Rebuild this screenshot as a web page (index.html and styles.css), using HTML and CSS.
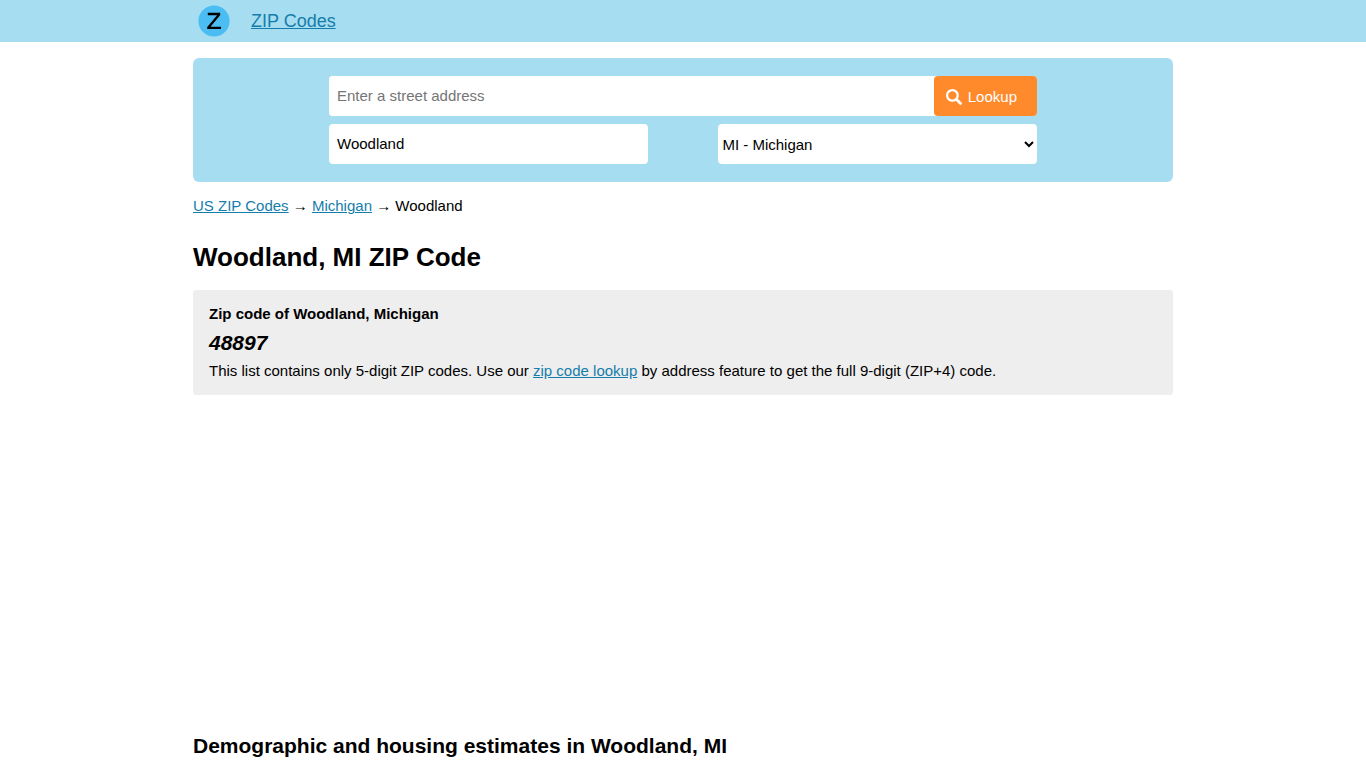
FILE: index.html
```html
<!DOCTYPE html>
<html lang="en">
<head>
    <meta charset="UTF-8">
    <meta name="viewport" content="width=device-width, initial-scale=1">
    <title>Woodland, MI ZIP Code</title>
    <link rel="stylesheet" href="styles.css">
</head>
<body>
<header class="top">
    <div class="wrap top-inner">
        <svg class="logo" viewBox="0 0 32 32" aria-hidden="true">
            <circle cx="16" cy="16" r="15.6" fill="#4bbdf3"/>
            <path d="M9.8 9h12.4M21.2 9.4L10.4 22.4M9.2 22.8h13.8" fill="none" stroke="#000" stroke-width="2.3"/>
        </svg>
        <a class="brand" href="#">ZIP Codes</a>
    </div>
</header>
<main class="wrap">
    <form class="search">
        <div class="fields">
            <div class="row address">
                <input class="street" type="text" name="street" placeholder="Enter a street address" aria-label="Street address">
                <button class="lookup" type="submit">
                    <svg class="icon" viewBox="0 0 16 16" aria-hidden="true">
                        <circle cx="6.4" cy="6.4" r="5.3" fill="none" stroke="#fff" stroke-width="2.2"/>
                        <path d="M10.6 10.6l3.9 3.9" stroke="#fff" stroke-width="2.8" stroke-linecap="round"/>
                    </svg>
                    Lookup
                </button>
            </div>
            <div class="row split">
                <input class="city" type="text" name="city" value="Woodland" aria-label="City">
                <select class="state" name="state" aria-label="State">
                    <option value="MI" selected>MI - Michigan</option>
                </select>
            </div>
        </div>
    </form>
    <nav class="crumbs">
        <a href="#">US ZIP Codes</a> → <a href="#">Michigan</a> → Woodland
    </nav>
    <h1>Woodland, MI ZIP Code</h1>
    <section class="codes">
        <p><b>Zip code of Woodland, Michigan</b></p>
        <p class="zip">48897</p>
        <p>This list contains only 5-digit ZIP codes. Use our <a href="#">zip code lookup</a> by address feature to get the full 9-digit (ZIP+4) code.</p>
    </section>
    <div class="banner"></div>
    <h2>Demographic and housing estimates in Woodland, MI</h2>
</main>
</body>
</html>
```
FILE: styles.css
```css
* {
    box-sizing: border-box;
}
body {
    margin: 0;
    background: #fff;
    color: #000;
    font: 15px/24px "Liberation Sans", Arial, sans-serif;
}
a {
    color: #157dab;
}
p {
    margin: 0;
}
.wrap {
    max-width: 980px;
    margin: 0 auto;
}
.top {
    background: #a6ddf0;
}
.top-inner {
    display: flex;
    align-items: center;
    gap: 21px;
    height: 42px;
    padding: 0 5px;
}
.logo {
    width: 32px;
    height: 32px;
}
.brand {
    font-size: 18px;
}
.search {
    margin-top: 16px;
    padding: 18px;
    background: #a6ddf0;
    border-radius: 6px;
}
.fields {
    max-width: 708px;
    margin: 0 auto;
}
.row {
    display: flex;
}
.address {
    background: #fff;
    border-radius: 4px;
}
.split {
    justify-content: space-between;
    margin-top: 8px;
}
input, select, button {
    height: 40px;
    border: 0;
    border-radius: 4px;
    background: #fff;
    color: #000;
    font: inherit;
}
input {
    padding: 0 8px 2px;
}
.street {
    flex: 1;
    min-width: 0;
}
.lookup {
    display: flex;
    align-items: center;
    gap: 6px;
    padding: 2px 20px 0 12px;
    background: #ff8a2b;
    color: #fff;
    cursor: pointer;
}
.icon {
    width: 16px;
    height: 16px;
}
.city, .state {
    width: 45%;
}
.crumbs {
    margin-top: 12px;
}
h1 {
    margin: 24px 0 18px;
    font-size: 26px;
    line-height: 30px;
}
.codes {
    padding: 12px 16px;
    background: #eee;
    border-radius: 3px;
}
.zip {
    font-size: 21px;
    font-style: italic;
    font-weight: bold;
    line-height: 33px;
}
/* space kept for the ad unit */
.banner {
    height: 320px;
}
h2 {
    margin: 18px 0;
    font-size: 21px;
    line-height: 26px;
}
```
